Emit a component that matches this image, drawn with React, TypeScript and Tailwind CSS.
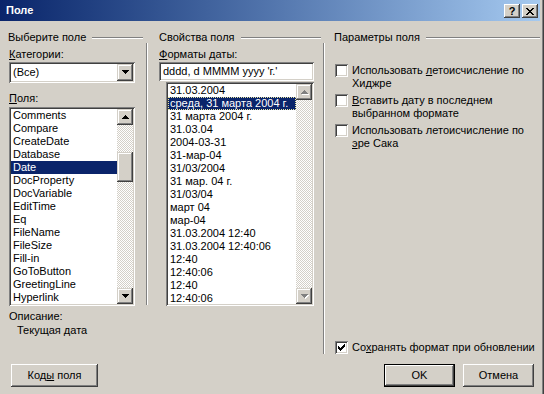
import React from 'react';

// classic 3D edges
const raisedSb = 'shadow-[inset_-1px_-1px_#404040,inset_1px_1px_#d4d0c8,inset_-2px_-2px_#808080,inset_2px_2px_#ffffff]';
const raisedBtn = 'shadow-[inset_-1px_-1px_#404040,inset_1px_1px_#ffffff,inset_-2px_-2px_#808080,inset_2px_2px_#d4d0c8]';
const sunken = 'shadow-[inset_1px_1px_#808080,inset_-1px_-1px_#ffffff,inset_2px_2px_#404040,inset_-2px_-2px_#d4d0c8]';
const dither = 'bg-[repeating-conic-gradient(#ffffff_0_25%,#d4d0c8_0_50%)] bg-[length:2px_2px]';

const UP = 'M3 0h1v1h1v1h1v1h1v1H0V3h1V2h1V1h1z';
const DOWN = 'M0 0h7v1H6v1H5v1H4v1H3V3H2V2H1V1H0z';

const Arrow: React.FC<{ dir: 'up' | 'down'; disabled?: boolean }> = ({ dir, disabled }) => (
  <svg width="8" height="5" viewBox="0 0 8 5" shapeRendering="crispEdges" className="block">
    {disabled && <path d={dir === 'up' ? UP : DOWN} fill="#ffffff" transform="translate(1 1)" />}
    <path d={dir === 'up' ? UP : DOWN} fill={disabled ? '#808080' : '#000000'} />
  </svg>
);

const ScrollBtn: React.FC<{ dir: 'up' | 'down'; disabled?: boolean }> = ({ dir, disabled }) => (
  <div className={`w-[16px] h-[16px] shrink-0 bg-[#d4d0c8] ${raisedSb} flex items-center justify-center pl-[1px]`}>
    <Arrow dir={dir} disabled={disabled} />
  </div>
);

const ScrollBar: React.FC<{ thumbTop?: number; thumbH?: number; disabled?: boolean }> = ({ thumbTop, thumbH, disabled }) => (
  <div className="w-[16px] h-full flex flex-col shrink-0">
    <ScrollBtn dir="up" disabled={disabled} />
    <div className={`flex-1 ${dither}`}>
      {thumbH !== undefined && (
        <div className={`w-[16px] bg-[#d4d0c8] ${raisedSb}`} style={{ marginTop: thumbTop, height: thumbH }} />
      )}
    </div>
    <ScrollBtn dir="down" disabled={disabled} />
  </div>
);

const ListBox: React.FC<{
  items: string[];
  selected: number;
  w: string;
  h: string;
  focus?: boolean;
  thumbTop?: number;
  thumbH?: number;
  disabled?: boolean;
}> = ({ items, selected, w, h, focus, thumbTop, thumbH, disabled }) => (
  <div className={`${w} ${h} ${sunken} bg-white p-[2px] flex`}>
    <div className="flex-1 overflow-hidden">
      {items.map((it, i) => (
        <div
          key={i}
          className={`h-[13px] pl-[2px] whitespace-nowrap ${
            i === selected ? 'bg-[#0a246a] text-white' : ''
          } ${i === selected && focus ? 'outline-1 outline-dotted outline-[#e8e4a0] -outline-offset-1' : ''}`}
        >
          {it}
        </div>
      ))}
    </div>
    <ScrollBar thumbTop={thumbTop} thumbH={thumbH} disabled={disabled} />
  </div>
);

const Heading: React.FC<{ label: string; pr: string }> = ({ label, pr }) => (
  <div className={`flex items-center h-[13px] ${pr}`}>
    <span className="whitespace-nowrap">{label}</span>
    <div className="flex-1 ml-[6px] h-[2px] border-t border-[#808080] border-b border-b-white" />
  </div>
);

const CheckBox: React.FC<{ checked?: boolean }> = ({ checked }) => (
  <div className={`w-[13px] h-[13px] shrink-0 bg-white ${sunken} flex items-center justify-center`}>
    {checked && (
      <svg width="7" height="7" viewBox="0 0 7 7" shapeRendering="crispEdges">
        <path
          d="M6 0h1v3H6v1H5v1H4v1H3v1H2V6H1V5H0V2h1v1h1v1h1V3h1V2h1V1h1z"
          fill="#000000"
        />
      </svg>
    )}
  </div>
);

const CheckRow: React.FC<{ checked?: boolean; children: React.ReactNode; className?: string }> = ({ checked, children, className }) => (
  <div className={`flex items-start ${className || ''}`}>
    <CheckBox checked={checked} />
    <div className="ml-[4px] whitespace-nowrap">{children}</div>
  </div>
);

const Separator: React.FC<{ h: string }> = ({ h }) => (
  <div className={`self-start mt-[22px] ${h} w-[2px] shrink-0 border-l border-[#808080] border-r border-r-white`} />
);

const fields = [
  'Comments', 'Compare', 'CreateDate', 'Database', 'Date', 'DocProperty', 'DocVariable', 'EditTime',
  'Eq', 'FileName', 'FileSize', 'Fill-in', 'GoToButton', 'GreetingLine', 'Hyperlink',
];

const formats = [
  '31.03.2004', 'среда, 31 марта 2004 г.', '31 марта 2004 г.', '31.03.04', '2004-03-31', '31-мар-04',
  '31/03/2004', '31 мар. 04 г.', '31/03/04', 'март 04', 'мар-04', '31.03.2004 12:40',
  '31.03.2004 12:40:06', '12:40', '12:40:06', '12:40', '12:40:06',
];

export default function App() {
  return (
    <div className="w-[544px] h-[394px] bg-[#d4d0c8] font-['Liberation_Sans',Arial,sans-serif] text-[11px] leading-[13px] text-black flex flex-col pr-[4px] shadow-[inset_-1px_0_#404040,inset_-2px_0_#808080] overflow-hidden">
      {/* title bar */}
      <div className="h-[21px] shrink-0 bg-linear-to-r from-[#0a246a] to-[#a6caf0] flex items-start pl-[6px] pr-[2px]">
        <span className="self-center text-white font-bold">Поле</span>
        <div className={`ml-auto mt-[4px] w-[16px] h-[14px] bg-[#d4d0c8] ${raisedBtn} flex items-center justify-center font-bold text-[11px] leading-none`}>?</div>
        <div className={`ml-[2px] mt-[4px] w-[16px] h-[14px] bg-[#d4d0c8] ${raisedBtn} flex items-center justify-center`}>
          <svg width="8" height="7" viewBox="0 0 8 7" shapeRendering="crispEdges">
            <path d="M0 0h2v1h1v1h2V1h1V0h2v1H7v1H6v1H5v1h1v1h1v1h1v1H6V6H5V5H3v1H2v1H0V6h1V5h1V4h1V3H2V2H1V1H0z" fill="#000" />
          </svg>
        </div>
      </div>

      {/* body */}
      <div className="h-[333px] shrink-0 flex">
        {/* left: choose field */}
        <div className="w-[146px] shrink-0 pl-[9px] flex flex-col">
          <div className="mt-[10px] -ml-[1px]">
            <Heading label="Выберите поле" pr="pr-[3px]" />
          </div>
          <div className="mt-[4px]"><u>К</u>атегории:</div>
          <div className={`mt-[1px] w-[126px] h-[21px] ${sunken} bg-white p-[2px] flex`}>
            <div className="flex-1 pl-[2px] flex items-center">(Все)</div>
            <div className={`w-[16px] h-[17px] bg-[#d4d0c8] ${raisedSb} flex items-center justify-center pl-[1px]`}>
              <Arrow dir="down" />
            </div>
          </div>
          <div className="mt-[9px]"><u>П</u>оля:</div>
          <div className="mt-[2px]">
            <ListBox items={fields} selected={4} w="w-[126px]" h="h-[199px]" thumbTop={27} thumbH={30} />
          </div>
          <div className="mt-[4px]">Описание:</div>
          <div className="mt-[1px] pl-[8px]">Текущая дата</div>
        </div>

        <Separator h="h-[262px]" />

        {/* middle: field properties */}
        <div className="w-[175px] shrink-0 pl-[11px] flex flex-col">
          <div className="mt-[10px]">
            <Heading label="Свойства поля" pr="pr-[2px]" />
          </div>
          <div className="mt-[4px]"><u>Ф</u>орматы даты:</div>
          <div className={`mt-[1px] w-[155px] h-[19px] ${sunken} bg-white p-[2px] flex items-center`}>
            <span className="pl-[2px] whitespace-nowrap">dddd, d MMMM yyyy 'г.'</span>
          </div>
          <div className="mt-[1px] ml-[7px]">
            <ListBox items={formats} selected={1} focus w="w-[148px]" h="h-[224px]" disabled />
          </div>
        </div>

        <Separator h="h-[311px]" />

        {/* right: field options */}
        <div className="flex-1 pl-[10px] flex flex-col">
          <div className="mt-[10px] -ml-[1px]">
            <Heading label="Параметры поля" pr="pr-0" />
          </div>
          <div className="mt-[20px] flex flex-col gap-[4px]">
            <CheckRow>
              Использовать <u>л</u>етоисчисление по<br />Хиджре
            </CheckRow>
            <CheckRow>
              <u>В</u>ставить дату в последнем<br />выбранном формате
            </CheckRow>
            <CheckRow>
              Использовать летоисчисление по<br /><u>э</u>ре Сака
            </CheckRow>
          </div>
          <CheckRow checked className="mt-auto">
            Со<u>х</u>ранять формат при обновлении
          </CheckRow>
        </div>
      </div>

      {/* buttons */}
      <div className="flex items-start mt-[10px]">
        <div className={`ml-[11px] w-[87px] h-[23px] bg-[#d4d0c8] ${raisedBtn} flex items-center justify-center`}>
          <span>Код<u>ы</u> поля</span>
        </div>
        <div className="ml-auto w-[71px] h-[23px] border border-black">
          <div className={`w-full h-full bg-[#d4d0c8] ${raisedBtn} flex items-center justify-center`}>OK</div>
        </div>
        <div className={`ml-[8px] mr-[6px] w-[71px] h-[23px] bg-[#d4d0c8] ${raisedBtn} flex items-center justify-center`}>
          Отмена
        </div>
      </div>
    </div>
  );
}
